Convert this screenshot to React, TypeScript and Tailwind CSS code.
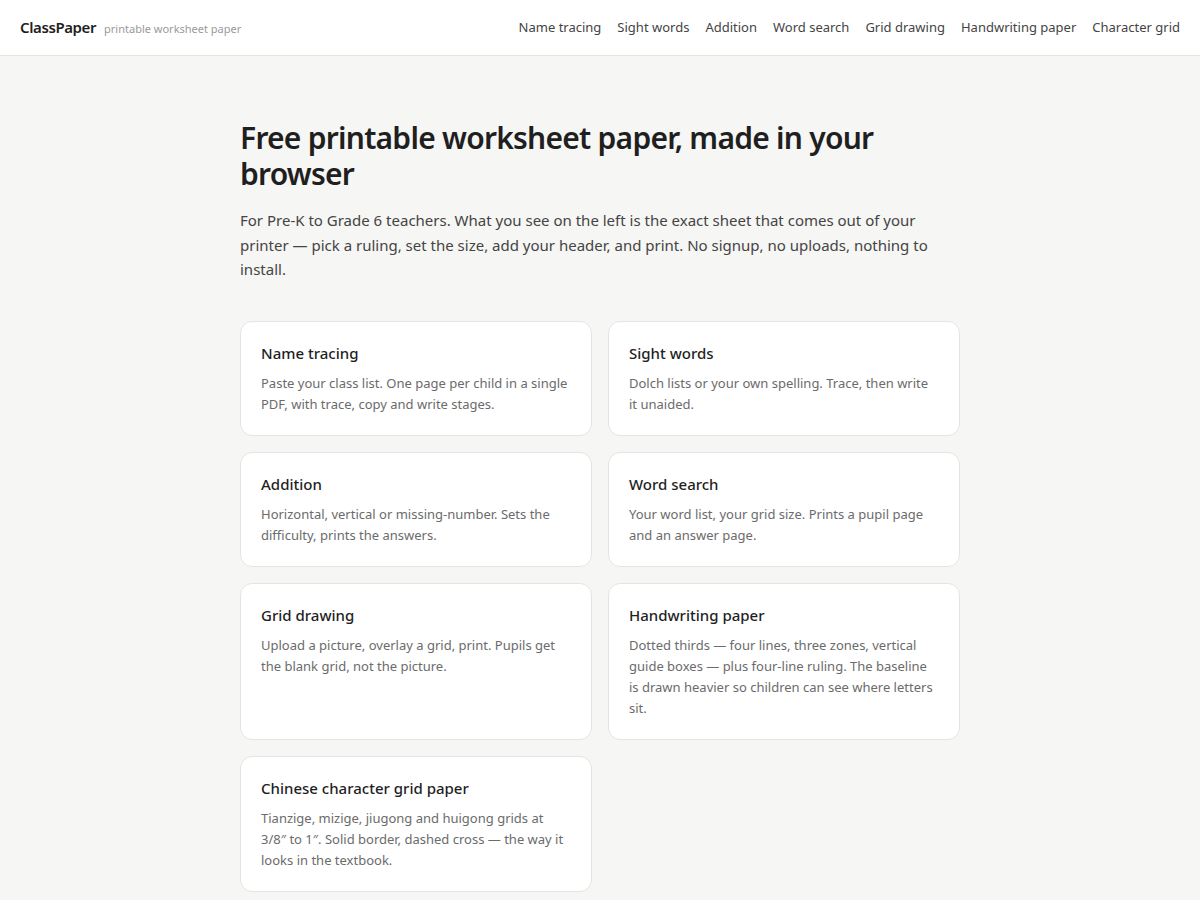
import React from 'react'

const navLinks = [
  'Name tracing',
  'Sight words',
  'Addition',
  'Word search',
  'Grid drawing',
  'Handwriting paper',
  'Character grid',
]

const tools = [
  {
    id: 'name-tracing',
    title: 'Name tracing',
    description: 'Paste your class list. One page per child in a single PDF, with trace, copy and write stages.',
  },
  {
    id: 'sight-words',
    title: 'Sight words',
    description: 'Dolch lists or your own spelling. Trace, then write it unaided.',
  },
  {
    id: 'addition',
    title: 'Addition',
    description: 'Horizontal, vertical or missing-number. Sets the difficulty, prints the answers.',
  },
  {
    id: 'word-search',
    title: 'Word search',
    description: 'Your word list, your grid size. Prints a pupil page and an answer page.',
  },
  {
    id: 'grid-drawing',
    title: 'Grid drawing',
    description: 'Upload a picture, overlay a grid, print. Pupils get the blank grid, not the picture.',
  },
  {
    id: 'handwriting',
    title: 'Handwriting paper',
    description:
      'Dotted thirds — four lines, three zones, vertical guide boxes — plus four-line ruling. The baseline is drawn heavier so children can see where letters sit.',
  },
  {
    id: 'character-grid',
    title: 'Chinese character grid paper',
    description:
      'Tianzige, mizige, jiugong and huigong grids at 3/8″ to 1″. Solid border, dashed cross — the way it looks in the textbook.',
  },
]

const App: React.FC = () => {
  return (
    <div className="min-h-screen bg-[#f6f6f4] text-[#1f1f1f] font-['Noto_Sans',sans-serif]">
      {/* Header */}
      <header className="h-[56px] bg-white border-b border-[#e4e4e2] px-5 flex items-center justify-between">
        <div className="flex items-baseline gap-2">
          <span className="text-[15px] font-semibold tracking-[-0.4px] text-[#1f1f1f]">ClassPaper</span>
          <span className="text-[11px] text-[#9a9a9a]">printable worksheet paper</span>
        </div>
        <nav className="flex items-center gap-4">
          {navLinks.map((link) => (
            <a key={link} href="#" className="text-[13px] text-[#444]">
              {link}
            </a>
          ))}
        </nav>
      </header>

      {/* Main */}
      <main className="max-w-[720px] mx-auto pt-[64px] pb-10">
        <h1 className="text-[30px] leading-[36px] font-semibold tracking-[-0.75px] text-[#1f1f1f] mb-4">
          Free printable worksheet paper, made in your browser
        </h1>
        <p className="text-[15px] leading-[24.5px] text-[#444] mb-[39px]">
          For Pre-K to Grade 6 teachers. What you see on the left is the exact sheet that comes out of your
          printer — pick a ruling, set the size, add your header, and print. No signup, no uploads, nothing to
          install.
        </p>

        <div className="grid grid-cols-2 gap-4">
          {tools.map((tool) => (
            <a
              key={tool.id}
              href="#"
              className="block bg-white border border-[#e4e4e2] rounded-xl p-5"
            >
              <h3 className="text-[15px] leading-[22px] font-medium text-[#1f1f1f] mb-[9px]">{tool.title}</h3>
              <p className="text-[13px] leading-[21px] text-[#6b6b6b]">{tool.description}</p>
            </a>
          ))}
        </div>
      </main>
    </div>
  )
}

export default App
